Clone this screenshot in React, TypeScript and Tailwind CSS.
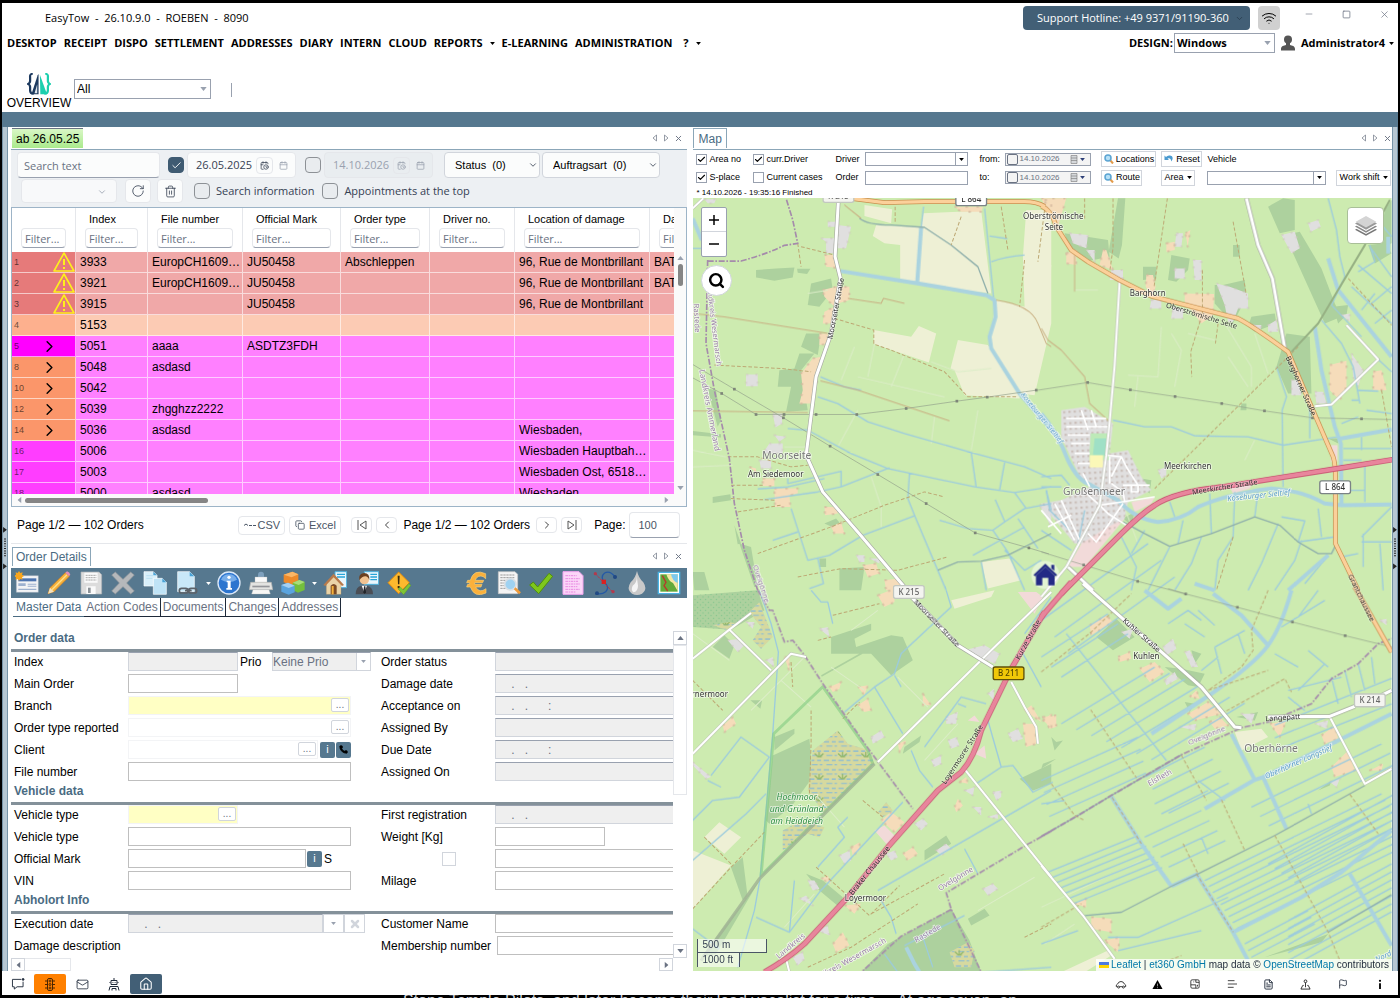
import { useState } from 'react'
import type { ReactNode } from 'react'
import clsx from 'clsx'
import {
  Wifi, Minus, Square, X, ChevronDown, ChevronLeft, ChevronRight, RotateCw, Trash2, Check,
  Mail, Home, FileText, Flag, Calendar, CalendarClock, Search, Copy, Phone,
} from 'lucide-react'

type Row = {
  no: string
  mark?: 'warn' | 'open'
  tone: string
  head: string
  cells: string[]
}

const PINK = 'bg-[#ff80ff]'
const RED = 'bg-[#f0a8a8]'

const rows: Row[] = [
  { no: '1', mark: 'warn', tone: RED, head: 'bg-[#e67a7a]', cells: ['3933', 'EuropCH1609…', 'JU50458', 'Abschleppen', '', '96, Rue de Montbrillant', 'BAT'] },
  { no: '2', mark: 'warn', tone: RED, head: 'bg-[#e67a7a]', cells: ['3921', 'EuropCH1609…', 'JU50458', '', '', '96, Rue de Montbrillant', 'BAT'] },
  { no: '3', mark: 'warn', tone: RED, head: 'bg-[#e67a7a]', cells: ['3915', '', 'JU50458', '', '', '96, Rue de Montbrillant', ''] },
  { no: '4', tone: 'bg-[#fccbb4]', head: 'bg-[#fdb08e]', cells: ['5153', '', '', '', '', '', ''] },
  { no: '5', mark: 'open', tone: PINK, head: 'bg-[#ff00ff]', cells: ['5051', 'aaaa', 'ASDTZ3FDH', '', '', '', ''] },
  { no: '8', mark: 'open', tone: PINK, head: 'bg-[#fb966a]', cells: ['5048', 'asdasd', '', '', '', '', ''] },
  { no: '10', mark: 'open', tone: PINK, head: 'bg-[#fb966a]', cells: ['5042', '', '', '', '', '', ''] },
  { no: '12', mark: 'open', tone: PINK, head: 'bg-[#fb966a]', cells: ['5039', 'zhgghzz2222', '', '', '', '', ''] },
  { no: '14', mark: 'open', tone: PINK, head: 'bg-[#fb966a]', cells: ['5036', 'asdasd', '', '', '', 'Wiesbaden,', ''] },
  { no: '16', tone: PINK, head: 'bg-[#ff3dff]', cells: ['5006', '', '', '', '', 'Wiesbaden Hauptbah…', ''] },
  { no: '17', tone: PINK, head: 'bg-[#ff3dff]', cells: ['5003', '', '', '', '', 'Wiesbaden Ost, 6518…', ''] },
  { no: '18', tone: PINK, head: 'bg-[#ff3dff]', cells: ['5000', 'asdasd', '', '', '', 'Wiesbaden', ''] },
]

const columns = ['Index', 'File number', 'Official Mark', 'Order type', 'Driver no.', 'Location of damage', 'Damage']

/* ---------- small shared pieces ---------- */

function Caret({ className, small }: { className?: string; small?: boolean }) {
  return (
    <svg viewBox="0 0 8 5" className={clsx('shrink-0', small ? 'h-[3px] w-[5px]' : 'h-1 w-[7px]', className)} fill="currentColor">
      <path d="M0 0h8L4 5z" />
    </svg>
  )
}

function PanelControls() {
  return (
    <div className="flex items-center gap-[5px] text-gray-500">
      <button aria-label="Previous"><svg viewBox="0 0 6 8" className="h-2 w-1.5" fill="none" stroke="currentColor" strokeWidth="0.7"><path d="M4.5 1v6L1 4z" /></svg></button>
      <button aria-label="Next"><svg viewBox="0 0 6 8" className="h-2 w-1.5" fill="none" stroke="currentColor" strokeWidth="0.7"><path d="M1.500 1v6L5 4z" /></svg></button>
      <button aria-label="Close"><X size={9} strokeWidth={2.5} /></button>
    </div>
  )
}

function Tick({ label, defaultChecked, big }: { label: string; defaultChecked?: boolean; big?: boolean }) {
  const [on, setOn] = useState(!!defaultChecked)
  return (
    <span className={clsx('relative inline-flex shrink-0', big ? 'size-4' : 'size-[11px]')}>
      <input
        type="checkbox"
        aria-label={label}
        checked={on}
        onChange={(e) => setOn(e.target.checked)}
        className={clsx(
          'size-full appearance-none border',
          big ? 'rounded border-[#8d9196] bg-[#e9ecef] checked:border-[#3f5b72] checked:bg-[#3f5b72]' : 'border-gray-400 bg-white',
        )}
      />
      {on && <Check className={clsx('pointer-events-none absolute inset-0 m-auto', big ? 'text-white' : 'text-black')} size={big ? 11 : 9} strokeWidth={big ? 2 : 3} />}
    </span>
  )
}

/* ---------- title bar, menu, ribbon ---------- */

function TitleBar() {
  return (
    <div className="flex h-7 items-center bg-white pr-2 pb-0.5 pl-[43px] font-['Open_Sans',sans-serif] text-[11px]">
      <span className="flex-1 pt-1 whitespace-pre">EasyTow  -  26.10.9.0  -  ROEBEN  -  8090</span>
      <button className="mt-1 flex h-6 w-[227px] items-center justify-between rounded bg-[#425f76] pr-1.5 pl-3.5 text-white">
        Support Hotline: +49 9371/91190-360 <ChevronDown size={9} className="text-[#24384a]" />
      </button>
      <button aria-label="Connection" className="mt-1 ml-2 flex h-6 w-[22px] items-center justify-center rounded bg-[#d0d0d0]">
        <Wifi size={16} strokeWidth={1.500} />
      </button>
      <div className="ml-6 flex items-center gap-7 pb-1 text-gray-500">
        <button aria-label="Minimize"><Minus size={10} strokeWidth={1.500} /></button>
        <button aria-label="Maximize"><Square size={9} strokeWidth={2} /></button>
        <button aria-label="Close window"><X size={11} strokeWidth={1.500} /></button>
      </div>
    </div>
  )
}

function MenuBar() {
  const items = ['DESKTOP', 'RECEIPT', 'DISPO', 'SETTLEMENT', 'ADDRESSES', 'DIARY', 'INTERN', 'CLOUD', 'REPORTS']
  return (
    <div className="flex h-6 items-center bg-white pr-1 pl-[5px] font-['Open_Sans',sans-serif] text-[11px] font-bold">
      <nav className="flex items-center gap-[7px] whitespace-nowrap">
        {items.map((item) => <button key={item}>{item}</button>)}
        <Caret small />
        <button>E-LEARNING</button>
        <button>ADMINISTRATION</button>
        <button className="ml-1">?</button>
        <Caret small />
      </nav>
      <label htmlFor="design" className="ml-auto">DESIGN:</label>
      <div className="relative ml-px h-5 w-[101px]">
        <select id="design" className="size-full appearance-none border border-gray-400 bg-white px-0.5"><option>Windows</option></select>
        <Caret className="pointer-events-none absolute top-2 right-1 text-gray-400" />
      </div>
      <svg viewBox="0 0 14 16" className="mx-[6px] h-4 w-3.5" fill="#555">
        <circle cx="7" cy="4.500" r="4" />
        <path d="M5 7h4v3c2 .6 5 1 5 4v1.500H0V14c0-3 3-3.400 5-4z" />
      </svg>
      <button className="flex items-center gap-1">Administrator4 <Caret small /></button>
    </div>
  )
}

function Ribbon() {
  return (
    <div className="flex h-[57px] items-start bg-white pl-1">
      <button className="flex w-[66px] flex-col items-center pt-[18px] text-xs leading-[17px]">
        <svg viewBox="0 0 54 60" preserveAspectRatio="none" className="h-[22px] w-6">
          <path d="M13 2Q6 2 7 12v10q0 6-5 8 5 2 5 8v10q0 9 8 9" fill="none" stroke="#1d3a5f" strokeWidth="5" />
          <path d="M41 2q7 0 6 10v10q0 6 5 8-5 2-5 8v10q0 9-8 9" fill="none" stroke="#1bcfae" strokeWidth="5" />
          <path d="M26 3v55h-9L10 58 24 6z" fill="#1d3a5f" />
          <path d="M29 5 45 58H30z" fill="#1bcfae" />
          <path d="M17 55l6-24v24z" fill="#dfe6ec" />
        </svg>
        OVERVIEW
      </button>
      <div className="relative mt-6 ml-0.5 h-5 w-[137px] text-xs">
        <select aria-label="View" className="size-full appearance-none border border-gray-400 bg-white px-0.5"><option>All</option></select>
        <Caret className="pointer-events-none absolute top-2 right-1 text-gray-400" />
      </div>
      <div className="mt-7 ml-5 h-3.5 w-px bg-gray-400" />
    </div>
  )
}

/* ---------- order list ---------- */

function DateBox({ value, disabled }: { value: string; disabled?: boolean }) {
  return (
    <div className={clsx('flex h-[26px] w-[109px] items-center rounded border', disabled ? 'border-gray-200 bg-[#e9edf0] text-gray-400' : 'border-gray-200 bg-[#fbfcfc]')}>
      <input aria-label="Date" defaultValue={value} disabled={disabled} className="w-[68px] pl-2 font-['Open_Sans',sans-serif] text-[11px]" />
      <button aria-label="Pick time" disabled={disabled} className="flex size-[17px] items-center justify-center rounded border border-gray-200"><CalendarClock size={9} /></button>
      <button aria-label="Pick date" disabled={disabled} className="ml-1.5 text-gray-400"><Calendar size={9} /></button>
    </div>
  )
}

function CountSelect({ text, className }: { text: string; className: string }) {
  return (
    <div className={clsx('relative h-[26px]', className)}>
      <select aria-label={text} className="size-full appearance-none rounded border border-gray-300 bg-[#fbfcfc] pl-2.5 font-['Liberation_Sans',sans-serif] text-[11px] text-black"><option>{text}</option></select>
      <ChevronDown size={10} className="pointer-events-none absolute top-2 right-0.5" />
    </div>
  )
}

function OrderFilters() {
  return (
    <div className="flex h-[57px] flex-col bg-[#edf0f3] px-1.5 pt-0.5 font-['Open_Sans',sans-serif] text-[11px] text-gray-700">
      <div className="flex items-center">
        <input placeholder="Search text" aria-label="Search text" className="mr-2 h-[26px] w-[143px] rounded border border-gray-200 border-b-gray-400 bg-[#fbfcfc] px-1.5 placeholder:text-gray-500" />
        <Tick big label="From date" defaultChecked />
        <div className="ml-[3px]"><DateBox value="26.05.2025" /></div>
        <div className="mr-[3px] ml-[9px] flex"><Tick big label="To date" /></div>
        <DateBox value="14.10.2026" disabled />
        <div className="ml-[11px] flex gap-0.5">
          <CountSelect text={'Status\u00a0 (0)'} className="w-[96px]" />
          <CountSelect text={'Auftragsart\u00a0 (0)'} className="w-[118px]" />
        </div>
      </div>
      <div className="flex items-center pt-px pl-1">
        <div className="relative h-6 w-24">
          <select aria-label="Preset" className="size-full appearance-none rounded border border-gray-200 bg-[#f8f9fa]"><option /></select>
          <ChevronDown size={10} className="pointer-events-none absolute top-2 right-2.5 text-gray-400" />
        </div>
        <button aria-label="Reload" className="ml-2 flex h-6 w-[26px] items-center justify-center rounded border border-gray-200 bg-[#fbfcfc]"><RotateCw size={14} strokeWidth={1.400} /></button>
        <button aria-label="Clear" className="ml-1.5 flex h-6 w-[26px] items-center justify-center rounded border border-gray-200 bg-[#fbfcfc]"><Trash2 size={13} strokeWidth={1.500} /></button>
        <label className="ml-[11px] flex items-center gap-1.5"><Tick big label="Search information" /> Search information</label>
        <label className="ml-2 flex items-center gap-1.5"><Tick big label="Appointments at the top" /> Appointments at the top</label>
      </div>
    </div>
  )
}

function OrderTable() {
  return (
    <div className="border border-[#9db4c7] bg-white">
      <div className="flex h-[286px]">
        <div className="min-w-0 flex-1 overflow-hidden">
          <table className="w-[700px] table-fixed border-separate border-spacing-0 text-xs">
            <colgroup>
              <col className="w-16" />
              <col className="w-[72px]" />
              <col className="w-[95px]" />
              <col className="w-[98px]" />
              <col className="w-[89px]" />
              <col className="w-[85px]" />
              <col className="w-[135px]" />
              <col />
            </colgroup>
            <thead>
              <tr className="h-11">
                {['', ...columns].map((name, i) => (
                  <th key={i} className="border-r border-gray-200 p-0 px-[9px] text-left align-bottom font-normal">
                    <span className="block pl-1 text-[11px] leading-4 whitespace-nowrap">{name}</span>
                    <input placeholder="Filter..." aria-label={`Filter ${name}`} className="mt-px mb-1 h-5 w-full rounded border border-gray-200 border-b-gray-400 px-[3px] font-['Open_Sans',sans-serif] text-[11px] placeholder:text-gray-500" />
                  </th>
                ))}
              </tr>
            </thead>
            <tbody>
              {rows.map((row) => (
                <tr key={row.no} className="h-[21px]">
                  <td className={clsx('border-r border-b border-white/60 p-0', row.head)}>
                    <div className="flex h-5 items-center pl-0.5 text-[9px] text-black/60">
                      <span className="w-[26px]">{row.no}</span>
                      {row.mark === 'open' && <ChevronRight size={19} strokeWidth={1.800} className="text-black" />}
                      {row.mark === 'warn' && (
                        <svg viewBox="0 0 22 20" className="ml-auto h-5 w-[22px]" fill="none" stroke="#fdf01c" strokeWidth="1.600" strokeLinejoin="round">
                          <path d="M11 1 21 19H1z" />
                          <path d="M11 7v6M11 15v2" strokeWidth="2" />
                        </svg>
                      )}
                    </div>
                  </td>
                  {row.cells.map((cell, i) => (
                    <td key={i} className={clsx('overflow-hidden border-r border-b border-white/60 p-0 pl-1 whitespace-nowrap', row.tone)}>{cell}</td>
                  ))}
                </tr>
              ))}
            </tbody>
          </table>
        </div>
        <div className="flex w-3 flex-col items-center bg-[#fafafa] pt-12 pb-1 text-gray-400">
          <Caret className="rotate-180" />
          <div className="mt-1 h-[22px] w-[5px] rounded-full bg-[#858585]" />
          <Caret className="mt-auto" />
        </div>
      </div>
      <div className="flex h-3 items-center bg-[#fafafa] pr-4 pl-1 text-gray-400">
        <Caret className="rotate-90" />
        <div className="ml-0.5 h-[5px] w-[183px] rounded-full bg-[#858585]" />
        <Caret className="ml-auto -rotate-90" />
      </div>
    </div>
  )
}

function Pager() {
  const box = 'flex items-center justify-center rounded border border-gray-200 bg-white'
  return (
    <div className="flex h-[37px] items-center border-b border-gray-200 pr-[7px] pl-1.5 text-xs">
      <span>Page 1/2 — 102 Orders</span>
      <button className={clsx(box, 'ml-auto h-[19px] w-[47px] gap-0.5 text-[11px] text-gray-600')}><svg viewBox="0 0 12 4" className="h-1 w-3" fill="none" stroke="currentColor"><path d="M0 2.500 2 1l2 1.500M5 2.500h3M9 2.500h3" /></svg>CSV</button>
      <button className={clsx(box, 'ml-1 h-[19px] w-[52px] gap-1 text-[11px] text-gray-600')}><Copy size={10} />Excel</button>
      <button aria-label="First page" className={clsx(box, 'ml-2.5 h-4 w-[21px]')}><svg viewBox="0 0 10 10" className="size-2.5" fill="none" stroke="#555"><path d="M1 0v10M9 1v8L3 5z" /></svg></button>
      <button aria-label="Previous page" className={clsx(box, 'ml-1 h-4 w-[21px]')}><ChevronLeft size={12} strokeWidth={1.500} /></button>
      <span className="ml-1.5">Page 1/2 — 102 Orders</span>
      <button aria-label="Next page" className={clsx(box, 'ml-1.5 h-4 w-[21px]')}><ChevronRight size={12} strokeWidth={1.500} /></button>
      <button aria-label="Last page" className={clsx(box, 'ml-1 h-4 w-[21px]')}><svg viewBox="0 0 10 10" className="size-2.5" fill="none" stroke="#555"><path d="M9 0v10M1 1v8l6-4z" /></svg></button>
      <label htmlFor="page-size" className="ml-3">Page:</label>
      <input id="page-size" defaultValue="100" className="ml-1 h-[26px] w-[51px] rounded border border-gray-200 border-b-gray-400 px-2 text-[11px] text-gray-600" />
    </div>
  )
}

/* ---------- order details ---------- */

function ToolIcon({ label, children }: { label: string; children: ReactNode }) {
  return (
    <button aria-label={label} className="flex w-8 items-center justify-center">
      <svg viewBox="0 0 72 72" className="size-6">{children}</svg>
    </button>
  )
}

function DetailsToolbar() {
  return (
    <div className="flex h-[30px] shrink-0 items-center bg-[#56788f] text-white">
      <ToolIcon label="New">
        <path d="M4 14h66v50H4z" fill="#f2f3f5" stroke="#9aa6b5" />
        <path d="M10 22h54v9H10z" fill="#4c74b0" />
        <path d="M10 37h22v8H10zM38 38h26v3H38zM38 44h26v3H38zM10 53h54v4H10z" fill="#9db1cf" />
        <path d="m12 0 4 6 7-2-2 7 6 4-6 4 2 7-7-2-4 5-4-5-6 2 1-7-6-4 6-4-1-7 6 2z" fill="#f7a51d" />
      </ToolIcon>
      <ToolIcon label="Edit">
        <path d="m3 68 6-18L55 5l12 11-46 46z" fill="#f7b13c" stroke="#d47f16" strokeWidth="2" />
        <path d="m9 50 12 12-18 6z" fill="#f3e2c0" />
        <path d="m55 5 5-4q8 2 10 10l-4 5z" fill="#e88fb5" />
        <path d="M15 56 60 11" stroke="#ffe08a" strokeWidth="4" />
      </ToolIcon>
      <ToolIcon label="Save">
        <path d="M6 3h54l8 8v58H6z" fill="#dcdcdc" stroke="#aeb2b5" strokeWidth="2" />
        <path d="M16 5h40v30H16zM22 46h28v23H22z" fill="#fafafa" />
        <path d="M20 13h32M20 20h32M20 27h32" stroke="#aaa" strokeWidth="3" strokeDasharray="4 1" />
        <path d="M27 50h8v16h-8z" fill="#8d9398" />
      </ToolIcon>
      <ToolIcon label="Cancel"><path d="m2 12 11-9 23 22L59 3l11 9-23 24 23 24-11 9-23-22-23 22-11-9 23-24z" fill="#b5b8bb" stroke="#8b9197" strokeWidth="2" /></ToolIcon>
      <ToolIcon label="Copy">
        <path d="M3 2h28l11 11v32H3z" fill="#d8effa" stroke="#fff" strokeWidth="2" />
        <path d="M31 22h27l12 12v36H31z" fill="#bfe3f6" stroke="#fff" strokeWidth="2" />
        <path d="M10 14h20M10 22h18" stroke="#b9dff2" strokeWidth="3" />
        <path d="m31 2 11 11H31zM58 22l12 12H58z" fill="#4aa3d6" />
      </ToolIcon>
      <ToolIcon label="Link document">
        <path d="M8 2h36l14 14v46H8z" fill="#c9e8f8" stroke="#fff" strokeWidth="2" />
        <path d="m44 2 14 14H44z" fill="#4aa3d6" />
        <path d="M22 52h10a6 6 0 0 1 0 14H20a7 7 0 0 1 0-14zM48 52h10a7 7 0 0 1 0 14H48a7 7 0 0 1 0-14zM30 59h20" fill="none" stroke="#5c6269" strokeWidth="5" />
      </ToolIcon>
      <span className="flex w-2.5 justify-center"><Caret small /></span>
      <ToolIcon label="Info">
        <circle cx="36" cy="36" r="33" fill="#2c75cf" stroke="#dce9f8" strokeWidth="4" />
        <path d="M12 26a26 26 0 0 1 48 0q-24 14-48 0z" fill="#78aeea" />
        <circle cx="36" cy="19" r="5" fill="#fff" />
        <path d="M29 29h12v22h4v5H28v-5h4V34h-3z" fill="#fff" />
      </ToolIcon>
      <ToolIcon label="Print">
        <path d="M36 2a9 9 0 0 1 9 9v10H27V11a9 9 0 0 1 9-9z" fill="#7ea0bd" />
        <path d="M18 18h36v18H18z" fill="#fafafa" stroke="#bbb" />
        <path d="M5 34h62l4 22H1z" fill="#e3e3e1" stroke="#b4b4b0" strokeWidth="2" />
        <path d="M10 44h52v5H10z" fill="#94959a" />
        <path d="M12 56h48l4 13H8z" fill="#f7f7f5" stroke="#bbb" />
      </ToolIcon>
      <ToolIcon label="Modules">
        <path d="m8 11 26-9 18 8v24L34 43 8 34z" fill="#ee8a2a" />
        <path d="m8 11 26-9 18 8-20 9z" fill="#fbb666" />
        <path d="m35 35 20-8 16 6v24l-20 8-16-8z" fill="#74bf3d" />
        <path d="m35 35 20-8 16 6-18 9z" fill="#a8dd7b" />
        <path d="m1 42 20-7 20 9v20l-18 7-22-9z" fill="#5aa4df" />
        <path d="m1 42 20-7 20 9-18 7z" fill="#a5d0f3" />
      </ToolIcon>
      <span className="flex w-2.5 justify-center"><Caret small /></span>
      <ToolIcon label="Home address">
        <path d="M36 2h35v48H36z" fill="#eaf6fc" stroke="#4cb1dd" strokeWidth="3" />
        <path d="M42 10h24M42 18h24" stroke="#29a4d8" strokeWidth="4" />
        <path d="M10 38 32 12l22 26v32H10z" fill="#ead3a7" stroke="#b69465" />
        <path d="m1 42 31-34 31 34-6 3-25-26L7 45z" fill="#b87a4b" />
        <path d="M23 44q9-10 18 0v26H23z" fill="#7b4a25" /><path d="M26 45h6v25h-6z" fill="#f6b33c" />
      </ToolIcon>
      <ToolIcon label="Customer">
        <path d="M28 2h43v38H28z" fill="#eaf6fc" stroke="#4cb1dd" strokeWidth="3" />
        <path d="M46 10h20M46 18h20M46 26h20" stroke="#29a4d8" strokeWidth="4" />
        <path d="M2 70q0-24 18-26h14q20 2 20 26z" fill="#4b4e55" />
        <path d="m20 44 8 20 8-20z" fill="#fff" /><path d="M27 46h4l2 18-4 5-4-5z" fill="#23262b" />
        <circle cx="28" cy="26" r="14" fill="#f1c392" />
        <path d="M13 28q-4-20 14-22 18 0 16 22-4-12-12-12-10 0-18 12z" fill="#6c4020" />
      </ToolIcon>
      <ToolIcon label="Warning">
        <path d="m35 3 32 32-32 33L3 35z" fill="#fdb92e" stroke="#e08a10" strokeWidth="3" />
        <path d="M32 14h6l-1 26h-4zM32 45h6v7h-6z" fill="#3b2c10" />
        <path d="m33 54 7-6 9 9 16-19 7 5-22 28z" fill="#7ec436" stroke="#4e9416" />
      </ToolIcon>
      <span className="w-[46px]" />
      <ToolIcon label="Invoice"><path d="M62 8v15Q48 8 34 21l-3 7h25l-3 7H29v5h22l-3 8H32q11 20 31 5v13Q28 82 16 48H5l3-8h6v-5H5l3-7h8Q26-8 62 8z" fill="#fbb03b" stroke="#f8d079" strokeWidth="2" /></ToolIcon>
      <ToolIcon label="Find document">
        <path d="M4 2h50l8 8v58H4z" fill="#f4f4f4" stroke="#c5c5c5" strokeWidth="2" />
        <path d="M10 12h42M10 20h42M10 28h20M10 36h16M10 44h16M10 52h18" stroke="#9a9a9a" strokeWidth="3" strokeDasharray="7 2" />
        <circle cx="40" cy="40" r="17" fill="#9fd2f1" stroke="#d9dfe4" strokeWidth="5" /><path d="m53 52 16 15" stroke="#ef9c3b" strokeWidth="8" />
      </ToolIcon>
      <ToolIcon label="Confirm"><path d="m2 42 11-9 13 15L60 7l11 9-42 52z" fill="#7fc71c" stroke="#4f8f0d" strokeWidth="3" /></ToolIcon>
      <ToolIcon label="Notes">
        <path d="M6 2h48l12 12v56H6z" fill="#fbd6f8" stroke="#f3a4ef" strokeWidth="3" />
        <path d="M13 14h34M13 23h44M13 31h38M13 39h44M13 47h36M13 55h44M13 63h30" stroke="#e88be2" strokeWidth="3" strokeDasharray="8 2 4 2" />
      </ToolIcon>
      <ToolIcon label="Route">
        <path d="M66 17Q50-3 35 6 22 16 32 32 52 48 38 62 28 70 14 68" fill="none" stroke="#2459a5" strokeWidth="4" />
        <path d="M7 8 58 62" stroke="#bd3143" strokeWidth="3" strokeDasharray="8 3" />
        <path d="M26 26h13v13H26z" fill="#da2020" />
        <circle cx="7" cy="8" r="5" fill="#b23a4d" /><circle cx="60" cy="62" r="5" fill="#b23a4d" /><circle cx="66" cy="18" r="6" fill="#214984" /><circle cx="12" cy="67" r="6" fill="#214984" />
      </ToolIcon>
      <ToolIcon label="Fluids">
        <path d="M36 0q5 22 19 34 14 22-4 34-15 8-30 0-18-12-4-34Q31 22 36 0z" fill="#c9c9c9" />
        <path d="M35 14q2 20-12 30-6 12 2 20 14-2 14-20z" fill="#f5f5f5" />
      </ToolIcon>
      <ToolIcon label="Map view">
        <path d="M4 4h64v64H4z" fill="#fff" stroke="#4cb4e4" strokeWidth="4" />
        <path d="M10 10h52v52H10z" fill="#62a93a" /><path d="M28 10q6 20 20 26l14 24V10z" fill="#f4e7a5" />
        <path d="M42 10q4 20 20 26V10z" fill="#7cc8ef" />
        <path d="m16 14 11 20-6 10 11 16" fill="none" stroke="#b8392b" strokeWidth="4" />
      </ToolIcon>
    </div>
  )
}

function Section({ title }: { title: string }) {
  return <h2 className="h-[21px] border-b-[3px] border-[#84919a] pl-[3px] text-xs leading-[15px] font-bold text-[#4a6b82]">{title}</h2>
}

type LineProps = { id: string; left: string; right: string; leftField?: ReactNode; rightMark?: ReactNode; rightField?: ReactNode }

function Line({ id, left, right, leftField, rightMark, rightField }: LineProps) {
  return (
    <div className="flex h-[22px] items-start pl-[3px] text-xs">
      <label htmlFor={`${id}-l`} className="w-[114px] shrink-0 leading-[21px] whitespace-nowrap">{left}</label>
      <div className="flex h-[19px] w-[253px] shrink-0 items-center">{leftField}</div>
      {rightMark
        ? <div className="flex h-[19px] w-[114px] shrink-0 items-center">{rightMark}</div>
        : <label htmlFor={`${id}-r`} className="min-w-[114px] shrink-0 pr-1.5 leading-[21px] whitespace-nowrap">{right}</label>}
      <div className="flex h-[19px] min-w-0 flex-1 items-center">{rightField}</div>
    </div>
  )
}

function Field({ id, width, value, tone = 'plain', label }: { id: string; width: string; value?: string; tone?: 'plain' | 'locked'; label?: string }) {
  return (
    <input
      id={id}
      aria-label={label}
      defaultValue={value}
      readOnly={tone === 'locked'}
      className={clsx('h-full border px-3 whitespace-pre', width, tone === 'locked' ? 'border-gray-300 border-t-gray-400 bg-[#efefef] text-gray-500' : 'border-[#bfbfbf] bg-white')}
    />
  )
}

function Picker({ id, width, yellow }: { id: string; width: string; yellow?: boolean }) {
  return (
    <div className={clsx('relative h-full shrink-0', width)}>
      <input id={id} className={clsx('size-full border border-gray-100', yellow ? 'bg-[#ffffc4]' : 'bg-white')} />
      <button type="button" aria-label="Choose" className="absolute top-0.5 right-0.5 h-3.5 w-[18px] rounded-xs border border-gray-300 bg-white text-[10px] leading-2.5 text-gray-500">...</button>
    </div>
  )
}

const wide = 'w-[230px] shrink-0'
const smallBtn = 'flex h-4 w-[15px] shrink-0 items-center justify-center rounded-xs bg-[#56788f] text-[11px] text-white'

function DetailsForm() {
  return (
    <div className="flex min-h-0 flex-1 flex-col pt-3.5">
      <div className="flex min-h-0 flex-1">
        <form className="min-w-0 flex-1 overflow-hidden">
          <Section title="Order data" />
          <Line
            id="index" left="Index" right="Order status"
            leftField={
              <>
                <Field id="index-l" width="w-[110px]" tone="locked" />
                <label htmlFor="prio" className="w-[34px] pl-0.5">Prio</label>
                <div className="relative h-full w-[99px]">
                  <select id="prio" className="size-full appearance-none border border-gray-300 border-t-gray-400 bg-[#efefef] text-gray-500"><option>Keine Prio</option></select>
                  <span className="pointer-events-none absolute top-px right-px flex h-[17px] w-3.5 items-center justify-center border-l border-gray-300 bg-white text-gray-400"><Caret small /></span>
                </div>
              </>
            }
            rightField={<Field id="index-r" width={wide} tone="locked" />}
          />
          <Line id="main" left="Main Order" right="Damage date" leftField={<Field id="main-l" width="w-[110px]" />} rightField={<Field id="main-r" width={wide} value=" .   ." tone="locked" />} />
          <Line id="branch" left="Branch" right="Acceptance on" leftField={<Picker id="branch-l" width="w-[223px]" yellow />} rightField={<Field id="branch-r" width={wide} value=" .   .      :" tone="locked" />} />
          <Line id="type" left="Order type reported" right="Assigned By" leftField={<Picker id="type-l" width="w-[223px]" />} rightField={<Field id="type-r" width={wide} tone="locked" />} />
          <Line
            id="client" left="Client" right="Due Date"
            leftField={
              <>
                <Picker id="client-l" width="w-[190px]" />
                <button type="button" aria-label="Client info" className={clsx(smallBtn, 'mr-px ml-0.5')}>i</button>
                <button type="button" aria-label="Call client" className={smallBtn}><Phone size={9} fill="#000" stroke="#000" /></button>
              </>
            }
            rightField={<Field id="client-r" width={wide} value=" .   .      :" tone="locked" />}
          />
          <Line id="file" left="File number" right="Assigned On" leftField={<Field id="file-l" width="w-[223px]" />} rightField={<Field id="file-r" width={wide} tone="locked" />} />
          <Section title="Vehicle data" />
          <Line id="vtype" left="Vehicle type" right="First registration" leftField={<Picker id="vtype-l" width="w-[110px]" yellow />} rightField={<Field id="vtype-r" width={wide} value=" .   ." tone="locked" />} />
          <Line id="vname" left="Vehicle type" right="Weight [Kg]" leftField={<Field id="vname-l" width="w-[223px]" />} rightField={<Field id="vname-r" width="w-[110px]" />} />
          <Line
            id="plate" left="Official Mark" right=""
            leftField={
              <>
                <Field id="plate-l" width="w-[178px]" />
                <button type="button" aria-label="Plate info" className={clsx(smallBtn, 'mr-0.5 ml-px')}>i</button>
                <label htmlFor="plate-s">S</label>
              </>
            }
            rightMark={<input id="plate-s" type="checkbox" className="ml-[61px] size-3.5 appearance-none border border-gray-300 bg-white" />}
            rightField={<Field id="plate-r" label="Official mark addition" width={wide} />}
          />
          <Line id="vin" left="VIN" right="Milage" leftField={<Field id="vin-l" width="w-[223px]" />} rightField={<Field id="vin-r" width={wide} />} />
          <Section title="Abholort Info" />
          <Line
            id="exec" left="Execution date" right="Customer Name"
            leftField={
              <>
                <Field id="exec-l" width="w-[195px]" value=" .   ." tone="locked" />
                <button type="button" aria-label="Pick date" className="flex h-full w-[21px] items-center justify-center border border-gray-300 text-gray-400"><Caret small /></button>
                <button type="button" aria-label="Clear date" className="flex h-full w-[21px] items-center justify-center border border-gray-300 text-gray-300"><X size={12} strokeWidth={5} /></button>
              </>
            }
            rightField={<Field id="exec-r" width={wide} />}
          />
          <Line id="damage" left="Damage description" right="Membership number" rightField={<Field id="damage-r" width={wide} />} />
          <textarea id="damage-l" readOnly className="ml-[3px] block h-10 w-[350px] resize-none bg-[#efefef]" />
        </form>
        <div className="flex w-[14px] flex-col text-gray-500">
          <button aria-label="Scroll up" className="flex h-3.5 shrink-0 items-center justify-center border border-gray-300"><Caret className="rotate-180" /></button>
          <div className="h-[150px] border border-gray-200" />
          <button aria-label="Scroll down" className="mt-auto flex h-3.5 shrink-0 items-center justify-center border border-gray-300"><Caret /></button>
        </div>
      </div>
      <div className="mr-3.5 flex h-[13px] shrink-0 text-gray-500">
        <button aria-label="Scroll left" className="flex w-3.5 items-center justify-center border border-gray-300"><Caret className="rotate-90" /></button>
        <div className="w-[46px] border border-l-0 border-gray-200" />
        <button aria-label="Scroll right" className="ml-auto flex w-3.5 items-center justify-center border border-gray-300"><Caret className="-rotate-90" /></button>
      </div>
    </div>
  )
}

function OrdersPane() {
  const tabs = ['Action Codes', 'Documents', 'Changes', 'Addresses']
  return (
    <section className="flex min-h-0 min-w-0 flex-[676_1_0%] flex-col bg-white">
      <div className="flex h-[23px] shrink-0 items-center justify-between border-b border-[#8ba6b8] pr-1 pl-px">
        <button className="h-5 border-t border-gray-500 bg-gradient-to-b from-[#d9f7c6] to-[#aaea8c] px-1 text-xs">ab 26.05.25</button>
        <PanelControls />
      </div>
      <OrderFilters />
      <OrderTable />
      <Pager />
      <div className="flex h-6 shrink-0 items-center justify-between pr-1 pl-px">
        <button className="h-[19px] border-x border-t border-[#8ba6b8] px-[3px] text-xs text-[#4a6b82]">Order Details</button>
        <PanelControls />
      </div>
      <DetailsToolbar />
      <div className="flex h-[19px] shrink-0 pl-0.5 text-xs text-gray-500">
        <button className="border-b border-[#4a6b82] px-[3px] text-[#4a6b82]">Master Data</button>
        {tabs.map((t) => <button key={t} className="border-r border-b border-gray-800 px-0.5">{t}</button>)}
      </div>
      <DetailsForm />
    </section>
  )
}

/* ---------- map ---------- */

// The area is drawn on four sheets, each with its own origin in map units (3 per pixel).
type Sheets = { nw?: string; ne?: string; sw?: string; se?: string }

const origin = {
  nw: 'translate(-6 -24)',
  ne: 'translate(1044 -24)',
  sw: 'translate(-6 1176)',
  se: 'translate(1044 1176)',
}

function Layer({ d, fill = 'none', stroke, width, dash, opacity }: { d: Sheets; fill?: string; stroke?: string; width?: number; dash?: string; opacity?: number }) {
  return (
    <g fill={fill} stroke={stroke} strokeWidth={width} strokeDasharray={dash} opacity={opacity} strokeLinejoin="round">
      {(Object.keys(d) as (keyof Sheets)[]).map((k) => <path key={k} transform={origin[k]} d={d[k]} />)}
    </g>
  )
}

// n parallel drainage ditches starting at (x, y), each shifted by (sx, sy)
function ditches(x: number, y: number, dx: number, dy: number, n: number, sx: number, sy: number) {
  return Array.from({ length: n }, (_, i) => `M${x + i * sx} ${y + i * sy}l${dx} ${dy}`).join('')
}

const farmland: Sheets = {
  nw: 'M697 70L870 62 893 250 900 310 720 290 627 268V165L580 160 545 138 555 105 690 112zM520 45l83 13-3 42-80-22zM548 420l112 20 23-32 52 22-22 87-165-55zM800 450l90 15 95 145v15l-165-10-30-75-12-5zM1005 60h75v340l-50 215-45-5-92-140 22-140 85 20-5-150zM870 1115l85-10 35 65-100 25z',
  ne: 'M0 220l30 5-10 175-20 80z',
  sw: 'M40 740l45-45 65 45-50 50zM5 780l115 45L5 955zM780 30L910 0l-10 20-110 35z',
  se: 'M580 425l80-10 20 25-80 40zM60 1145l140-65 10 15-80 50z',
}
const forest: Sheets = {
  nw: 'M195 240l60-5 55-3-5 30-55 10-55-10zM318 236l40 0-10 16-28-4zM360 280l60-15 5 35-40 50-35-5zM345 430h45l-10 65-50-25zM325 490h45l-40 50 20 120-65 5 15-75h-40l5-50 45-5zM5 722l85 10v10l-85-7zM65 920l53-8 2 18-55 8zM50 595l25 5 15 90-10 20zM130 1005l20 55-10 2zM145 1060l35 10 20 120h-10zM445 1135l75-5-10 70h-65zM385 1105h20v25h-20zM5 1145h35l15 55H10zM400 1000l35-15 10 12-20 14z',
  ne: 'M230 25h22l-10 140-10 40-30-20zM70 130l130 20 5 50-75 15-50-55zM390 195l55 10-5 35-35 35-25-5zM305 230h40v35l-40 5zM575 165h20v35h-20zM680 50l45-25 35 5v90l-45 10zM730 135l45-10 65 110 40 105 20 40-50 20zM735 430l70 10 5 170h-70l-35-80zM620 410l10-30 70-10 5 30-65 25zM520 285h25l65-15 5 50-40 80-55-60zM980 165l50-5 20 30-50 30zM1030 60l20-30v130l-40 20zM600 640h15v20h-18zM300 865l30 5-5 40-15-10zM245 985l35-20-10 40zM860 745h30v15zM875 350l45-5-5 30-25 25z',
  sw: 'M5 15L200 0l20 60-100 58-115-8zM65 170l35-35 30 30-15 40zM420 140l120-40v20l-50 25 5 25 105-35 35 5 30 70-65 45-60-65h-120zM245 495l110-50 10 115-65 90-65 50-10-10zM250 440l60-25v15l-60 50zM590 1060l190-105 55 95 35 95H510zM120 830l35-30 15 120-15 10zM205 870L30 1100l45-10zM700 780l65-45 15 25-80 50zM345 850l50 20 60 50-10 30-60-50zM830 985l50-30 15 20-55 30zM985 565l95-45v60l-55 20zM640 470l50-35-5 20-50 35zM390 255l150-85v6l-148 83zM178 330l35 0-5 25z',
  se: 'M165 140l60-55 55 55-65 40zM370 230l50 5 70 15-20 40-30-5zM450 180l30 10-20 30zM30 440l15 15 20-5-25 30zM5 520l40-15-45 30zM830 600l40-30-5 15zM585 380l65-15-10 25zM670 1100l190-70-20 25zM430 335l30 5-15 25z',
}
const town = 'M60 660l70-10 85 50-10 90 55-10 40 80 30 40-70 35-10 50-75 75h-75L0 940l60-10 85-40-25-20-60-130z'
const built: Sheets = {
  nw: 'M440 105l40 5-15 65h-25zM410 95h25v15h-25zM390 145h40v45h-25v-35zM165 553h35v35h-35zM245 670h28v30l-20 12zM235 760h40v30h-60zM205 810h35v25h-30zM250 735l35 5-20 15zM40 28h35l-5 12H50zM495 1095h25v20h-15zM535 1105h30v15zM1045 945l35-5v70z',
  ne: 'M85 130l55 5-5 40-40-15zM135 180h25v35zM210 240h35v30h-40zM330 330h30v25h-35zM395 350l32 10-3 25h-35zM455 210h25v60h-20zM400 235h30v30h-30zM405 130h20l-5 40h-20zM525 280l40 10 55 20v45h-30l-15 40h-15l-10-50zM720 135l40-10 15 50-25 15zM800 100l30-10 8 20-30 15zM680 405l25-15 5 35h-30zM635 405h25l-5 25zM930 490l35 50-15 50-15-30zM750 570h20l10 45h-30zM820 605h25l10 35h-30zM900 375l25-5 0 25zM350 840l25-10 0 25-15 10z',
  sw: 'M110 150l40-5 10 20-20 20zM165 95h25l-5 20zM225 210l20-10 5 30zM385 115l25-5 5 30zM5 515l55 45-15 5-40-40zM540 440l30-20 10 20-35 20zM765 380l35-15-5 35h-30zM770 450l25-10 10 25-25 10zM820 180l60-15 45 25-15 30-70-30zM720 510l30-15v25l-20 10zM820 600l30-10-5 25zM905 605l25-5v20l-15 10zM845 650l25 0v25zM890 680l30-10v15zM670 700l25-15 15 15-20 20zM445 795l30-15 5 30-20 10zM585 790l25-10 10 20-20 10zM350 870h20l15 25-20 5zM325 925l20-10 20 30zM950 430l30-15 15 30-30 10zM875 895l30-15 15 15-30 20zM735 780l30-20 15 15-30 20zM305 1100l30-15 5 20-20 20zM380 1020l30-15 5 30zM890 310l18-15 0 35z',
  se: 'M365 170l30-25 10 30-30 20zM370 270l30-25 10 20-35 20zM430 185l15-5 25 50h-20zM415 410l50-10-5 20zM820 400l40-10-5 25zM240 125l35-10-10 30zM600 370h40l-10 30zM865 575l30-10-10 25zM1015 90l20-5v20z',
}
const farmyard: Sheets = {
  nw: 'M400 195h28l5 38-28-3zM395 300l40-10h40v40l-35 10-20 60h-25l5-35 30-15-30-30zM385 430h25v30l-25 5zM365 505l25-5-10 60-15 80h-40l10-40-5-50zM250 895h70v15l-25 5 3 35h-46zM215 865h35v22h-35zM400 950h35l5 20-38 5zM420 1010l30-15 10 35h-30zM515 1125l40-5 10 30-35 10zM580 1170l40-5 15 35h-50zM790 50h85l-5 15h-60zM1060 30h20v60zM175 830l20 5 0 12z',
  ne: 'M430 310l88 2-3 63-35 25-50-65zM315 255h20l8 35-10 30-20-30zM185 180h10l20 60-40-15zM75 190l30-10v45l-30-5zM375 160l25-5v25l-25 5zM432 130l15-10-8 50zM865 525l50-13v78l-20 40-30-30zM995 545l25-5 15 60h-40zM0 25h75l-25 85-30-40z',
  sw: 'M95 405l30-25 10 20-35 25zM415 290l35-15-5 20-20 10zM500 290l30-5-10 30zM500 345l30-20 10 35-20 5zM280 200h15v45zM695 310l25 35h-25zM620 460l25-10-20 35zM570 690l30-25 40 30-30 30zM1000 360l20-15 30 50zM995 400h35l5 60-30 10-5-30zM480 770l25-15v25l-20 15zM635 790l30-20 15 20-30 20zM390 865l20-10 10 25zM460 945l50-5-20 30zM790 650l10-25 15 20-20 20zM805 575l20-15 5 20zM425 1060l30-35 20 40-40 20zM560 15l50-20v40l-30 15zM1055 390l25-20v40z',
  se: 'M145 105l50-30 20 20-65 40zM295 235l45-20 30 30-45 30zM230 200l35-15 5 20-35 10zM440 370l60-35 40 35-80 20zM505 395l30-15 25 25-40 10zM445 320l20-20 10 25zM5 380l40-5v35l-20 5zM685 400l50-10-20 50zM840 435l40-30 10 40-40 15zM870 530l50-50 20 60-60 20zM985 540l40-20-5 20zM100 940l35-15v25zM150 980l60 5v40l-60-10zM190 1050l45-10-5 45z',
}
const commercial: Sheets = {
  ne: 'M250 985L130 1130H80l40-70 80-50zM270 935l70-15-10 20-50 25zM868 765h20v50h-20zM560 880l75-5-10 20-50 15z',
  sw: 'M980 5h55l20 15-25 50zM850 490l30-25 5 40zM830 390l20-15 15 20zM550 720l30-15 30 30-20 30z',
}
const heath: Sheets = {
  sw: 'M365 480l75-60 30 40 65 20 15 40-150 150-50-70zM275 720l55-30 70 20-15 30-35-10-75 50zM175 65l30-30 40 105-35 35-25-25 25-40zM65 105l50-10 20 5-25 20zM560 665l25-30 20 25-30 20zM775 1085l55-30 20 25-10 50h-50z',
}
const river: Sheets = {
  nw: 'M448 243l232 37 205 35 25 15 3 50-18 60 5 35 85 135 115 130M690 110l-12 170M5 85l27 65',
  ne: 'M0 670Q50 730 80 810q30 60 60 70l90 50q50 55 120 65 70-5 120-45 90-40 220-55 90 5 160 45l50 5 150-2M820 410l20 130 40 170 18 50 2 180M860 205l30 95 80 100 80 100M898 745l152-27M1040 140v50M860 1095l-120 105M460 1180l60 20',
  sw: 'M645 1070l25 50 15 25',
  se: 'M210 618l90 142 90 127M465 850l110 175 45 85M490 655l150-87 25-8 205-100 180-90M570 430l70 138M665 560l70 155M575 1025l205-105 120-75 150-125M925 850l125 215M750 0q-30 110-70 165-40 55-170 145L330 430M515 10l85 65 80 90M310 0l70 55 40-30M390 887l80-37',
}
const stream: Sheets = {
  nw: 'M697 50l-7 60M880 55l27 270M900 215q40-15 100-20M895 138l53 8M388 560l72 30 50 10M380 620l60 20 90 55 110 35 200 57 160 43 80 35M290 715l60 5 130 70 110 45 260 55 120 17 110-17M595 833L450 890l-70 15-160 23M450 890v-47l-160 37v-15M200 896l90-6 110-25M840 787l15 105M940 817l-15 83M655 848l-5 77 22 55 93 220M670 977l-155 58-100 60-65 15-50-155M245 1050l75-25M380 1105l17 75-42 15M745 990l85 25 75 5 35-25 60-40 80-15M912 928l28 65M905 1020l45 65 50 115M845 1095l155-85M970 907l35 48M870 1115l15 85M5 175h30M940 1080l60 60 50-30M980 985l60 90M1065 900l15 60',
  ne: 'M215 690l95 20h80l70 27 160 3 105 25 165-25M705 530l30 90-13 40 3 230M840 390l60 70 35 70 20 110M0 860l60-5 25 30M0 890h60M805 650v95M860 25l25 95 10 80 15 60-40 85M950 225l100 85M985 165l15 50-50 30M1050 290l-60 50M930 290l120 110M1000 310l-40 50M1050 360l-50 40M870 345l90 95M1010 508l40 37M950 600l60 3M905 775h145M905 810h55M960 740v40M975 660l75 10M930 630h25M900 700l50-20M970 820v115M905 900h65M240 1040l45 90-15 70M425 990l-15 70M505 910l5 120M580 905l-5 135-45 70-10 90M650 900l-10 80M385 935l15 45M310 1020l-40 70M385 1070l-65 130M720 980l70 12-20 63M830 955l10 85M770 1055l110-15M860 1095l-70 85M960 1040l90-90M965 1030v100M900 1100l50-10M1050 1055h-90M700 1200l60-90 20-60M710 1000l-50 120-40 80M480 1040l-30 80-50 80M1015 1060l10 140M15 900l10 60 60 60M0 1020l90 60M130 960l-20 100M985 170l65 90M1000 80l50 60',
  sw: 'M205 0l35 100 22 85-17 245-38 435-17 95-50 170M360 0l30 35 20 0 15 65M765 0l15 50-150 140-20 60-60 40-90 75M550 290l85 140M610 255l20 35M5 690l60-60 80-10 90-120-85-60-90 115M50 570l40 20M5 810l160-140 60-60M195 980l100 45 15-155M295 1025l90-120 250-270M380 830l80-90-20-30 30-30M660 480l25 60 40 50M700 470l110-150 75 20M800 340l25 10M895 370l-5 20 40 140 35-5 60 80 60-30M930 530l-75 50M990 180l60 110M1080 600L560 900M570 930l30 50 15 50M820 775l40 75M580 1090l40 55M695 1040l30 90M1080 1130L870 1145M5 1015l80 60M1000 130l80-110M640 1065l180-90',
  se: `M0 640l70-10M480 740l20 50M800 640l10 30${ditches(0, 90, 320, -230, 3, 40, 50)}${ditches(0, 200, 200, -130, 3, 30, 30)}${ditches(60, 400, 280, -170, 7, 45, 18)}${ditches(0, 570, 290, -130, 4, 8, 36)}${ditches(310, 560, 180, -90, 4, 24, 36)}${ditches(20, 845, 270, -110, 7, 12, 16)}${ditches(310, 740, 170, -80, 4, 24, 30)}${ditches(340, 640, 140, -70, 2, 20, 30)}${ditches(630, 650, 390, -190, 3, 26, 28)}${ditches(490, 870, 530, -260, 9, 12, 18)}${ditches(740, 990, 310, -170, 7, 0, 24)}${ditches(610, 1060, 190, -100, 3, 10, 20)}${ditches(700, 480, 350, -140, 3, 0, -38)}${ditches(680, 820, 380, -210, 5, 20, 14)}M75 130l300 380M430 100l60 40M470 60l50 45M380 100l60-40 40 30M520 170l90-50M520 170l20 80M590 130l20 60M480 240l50-40M700 190l70 40M720 110l130-80M770 80l60-80M800 180l60 50M740 320l50 40M770 300l80-80M870 260l20 80M910 240l20 80M950 220l20 80M990 200l10 80M740 300l160-40M550 630l-80-60M200 1040h90L560 920M230 1080l250-60M0 1060l110-40`,
}
const greyStream: Sheets = {
  nw: 'M505 85q25 20 95 20l100 7 80 53 80 65 30 80M740 1140l60-25 70-2 80-18 130-65',
  ne: 'M245 995l65 35 75 38 125-38 130-50 75 25 55 50 60 35h40l15-30',
  se: 'M130 975l110-10 150-78 80-37 230-115 270-150M860 1025l190-113M0 738l110-63 100-60 210-122',
}
const track: Sheets = {
  nw: 'M430 385l118 35v42l52 18 160 65 70 75h150M70 525l200 10 90 10M110 800h90l100 30 50-5M140 965l130-20M200 1090l220-80 160-65 120-40 60 15M320 1160l130-25 170 5 150-40M120 885h95M612 50v50M810 80l-30 85M930 50l20 130M1000 210l-15 140M1060 60l-20 155M330 170l100 25M320 160l10 70M120 925l130 5',
  ne: 'M130 25v60M215 25v150l-10 70M378 25l-25 165-15 100M483 240v130l-35 115 3 75M530 400l-8 60M575 95l40 220M920 265l130 140M770 470L340 895M575 1040l-50 160M1020 600l30 170',
  sw: 'M5 270l90 90M300 215l5 75M380 150l40-10M425 75l140-35M360 360v100l-5 150M40 740l80 80M5 955l120-130 95-100M375 830l100 90 60 55 90-90M350 1130l130-60 200-130M540 970l220-120M515 630l60 50M1000 1040l80-40M455 385l50-50',
  se: 'M0 245l150-120 120-115M148 358l137 204M420 495l75 135M540 628l70 152M700 735l160 290 35 85M925 612l85 118M30 580l70 95 30 15M680 0l-50 120 5 60-35 50-100 70M540 370l190-105 20 40M425 760l45 90M0 1010l120-70M370 1115l50-20M465 850l110 175M300 760l-90-142M500 300l180-60',
}
const path: Sheets = {
  nw: 'M470 325l100 15 7-15 63 15M5 370l95 10 310 50M5 662l345 5M388 572l112 28 275 92M915 330q105 15 125 70l25 60 15 10M460 45l50 40',
  ne: 'M0 415l20 35 40 30 70 80 15 80 60 55M100 195v110',
}
const fieldLine: Sheets = {
  nw: 'M550 460l-20 100M640 490l-40 100M490 470l-40 100M500 660l-60 110M860 660l-20 120M730 680l-10 80M540 860l30 90v60M280 770h70M5 780l100 20M5 830l120-5M500 560l260 60M720 515l80 30 100-10M410 300l-60 10',
  ne: 'M100 300h70M360 410l-10 150M440 430l80 20M550 400l80 130v60M260 555l90 5M560 500l60 90M290 560l-10 90M640 430l40 120M390 430l30 50-20 110M230 900l60 160M640 750l-30 60',
  sw: 'M5 130l110 80M340 200L180 360M560 60l-80 60M620 260l90 90M800 400l-100 110M420 230l100 70M270 270l90 80M380 620l80 90M860 960l170-100M280 1010l90-100',
  se: 'M0 950l300-140M100 1000l-90 60',
}
const boundary: Sheets = {
  nw: 'M50 213h100q80-22 130-47l40-6-15-70-20-65M50 210l-5 250 25 140 45 205 15 135 30 140 40 120',
  sw: 'M200 0l35 60h10l35 95 25-5 35 45 55 85 140 200 130 175M1080 722l-80 45-235 140 15 50 90 188M780 957l-150 80-120 108',
  se: 'M0 738l110-63 100-60 210-122 140-63 40-18 80-17 130-55 60-75 80-45 60-60 40-15',
}
const power: Sheets = {
  nw: 'M5 523l125 74 147 86 140 85 143 85 145 87 147 88 161 45 60 18M5 563l87 47 103 63h302l148-18 152-22 91-12 147-21',
  ne: 'M-10 600l149-23 128 22 134 20 140 21 128 22 144 21 147 3 90 2M0 1085l127 39 162 49 144 38',
  se: 'M380-5l53 16 155 40 165 44 158 41 139 34',
}
const pylons: [keyof typeof origin, number, number][] = [
  ['nw', 130, 597], ['nw', 277, 683], ['nw', 417, 768], ['nw', 560, 853], ['nw', 705, 940], ['nw', 852, 1028], ['nw', 1013, 1073],
  ['nw', 92, 610], ['nw', 195, 673], ['nw', 279, 673], ['nw', 375, 673], ['nw', 497, 673], ['nw', 645, 655], ['nw', 797, 633], ['nw', 888, 621], ['nw', 1035, 600],
  ['ne', 139, 577], ['ne', 267, 599], ['ne', 401, 619], ['ne', 541, 640], ['ne', 669, 662], ['ne', 813, 683], ['ne', 960, 686], ['ne', 127, 1124], ['ne', 289, 1173],
  ['se', 433, 11], ['se', 588, 51], ['se', 753, 95], ['se', 911, 136],
]
const lane: Sheets = {
  nw: 'M5 55l32-30',
  ne: 'M235 275l-15 250-15 170-10 100-20 150-100 185-75 90M915 405l95 103-140 135-50 5',
  sw: 'M5 205l110-87 65-50M115 118l125 122M5 490l295-300 45 10M560 515l340-335L1080 5M815 530l265 330M960 275l40 75 35 60 5 50M285 1105l10 40',
  se: 'M865 380l105 200 80-45M0 825l125 150 95 130',
}
const street: Sheets = {
  ne: 'M75 685h120M75 710h125M80 735h65M90 760h55M100 790h45M110 820h35M150 660l15 50M120 660l20 60M195 795l45 5 15 30 35 55h35M175 945l70-10 95-15M210 880l35 25 5 30M205 800v80M240 800l-30 60M245 885h75M270 885v20h20v-20M175 945l25 25 55 35M40 940l60 110M60 930l55 120M0 960l60 70M20 1010l70-35M140 1030l25 25 80-115M130 905l45 40M145 890l-20-40',
}
const tertiary: Sheets = {
  nw: 'M442 30l-10 170 16 65-28 165-45 130-30 235 50 110 105 120 140 165',
  ne: 'M615 25l35 140 43 100 37 210M80 1130l75 70',
  sw: 'M640 0l60 60 100 105 105 65',
  se: 'M125-20l125 110 105 90 125 110 100 120 20 2M680 380l120-2h65l75-30M1020 315l30-15',
}
const secondary: Sheets = {
  nw: 'M480 25l100 13 120-3h300q35 0 60 14',
  ne: 'M0 48q30 12 45 62l45 70 50 35 95 55 95 48 260 67q40 20 150 100l70 165 65 150q7 20 7 70v190l68 140',
  se: 'M940-10l110 195',
}
const primary: Sheets = {
  ne: 'M1055 808l-155 25-360 57q-140 15-200 55-40 25-100 85L60 1210',
  se: 'M90-25L0 80',
  sw: 'M1060 65l-15 25-85 145-90 185q-20 80-60 125l-70 55-150 170-120 150-130 140q-50 45-120 85',
}

const labels: { at: keyof typeof origin; x: number; y: number; r?: number; size: number; color?: string; text: string; italic?: boolean }[] = [
  { at: 'nw', x: 287, y: 807, size: 31, color: '#777', text: 'Moorseite' },
  { at: 'nw', x: 254, y: 861, size: 24, text: 'Am Siedemoor' },
  { at: 'nw', x: 434, y: 355, r: -79, size: 22, text: 'Moorseiter Straße' },
  { at: 'nw', x: 70, y: 405, r: 83, size: 22, color: '#9a7fa8', text: 'Landkreis Wesermarsch' },
  { at: 'nw', x: 18, y: 384, r: 87, size: 23, color: '#9a7fa8', text: 'Rastede' },
  { at: 'nw', x: 56, y: 660, r: 79, size: 24, color: '#9a7fa8', text: 'Landkreis Ammerland' },
  { at: 'nw', x: 212, y: 1180, r: 72, size: 23, color: '#9a7fa8', text: 'Ovelgönne' },
  { at: 'ne', x: 36, y: 88, size: 24, text: 'Oberströmische' },
  { at: 'ne', x: 38, y: 119, size: 24, text: 'Seite' },
  { at: 'ne', x: 319, y: 317, size: 24, text: 'Barghorn' },
  { at: 'ne', x: 481, y: 376, r: 17, size: 22, text: 'Oberströmische Seite' },
  { at: 'ne', x: 779, y: 587, r: 66, size: 22, text: 'Barghorner Straße' },
  { at: 'ne', x: 439, y: 836, size: 24, text: 'Meerkirchen' },
  { at: 'ne', x: 158, y: 915, size: 31, color: '#777', text: 'Großenmeer' },
  { at: 'ne', x: 550, y: 890, r: -9, size: 22, text: 'Meerkircher Straße' },
  { at: 'ne', x: 652, y: 915, r: -6, size: 23, color: '#5f9fca', text: 'Koseburger Sieltief', italic: true },
  { at: 'ne', x: 4, y: 682, r: 51, size: 23, color: '#5f9fca', text: 'Koseburger Sieltief', italic: true },
  { at: 'ne', x: 961, y: 1222, r: 64, size: 22, text: 'Grantchaussee' },
  { at: 'sw', x: 738, y: 98, r: 46, size: 22, text: 'Moorseiter Straße' },
  { at: 'sw', x: 1010, y: 148, r: -61, size: 22, text: 'Kurze Straße' },
  { at: 'sw', x: 813, y: 492, r: -57, size: 22, text: 'Loyermoorer Straße' },
  { at: 'sw', x: 535, y: 840, r: -51, size: 23, text: 'Braker Chaussee' },
  { at: 'sw', x: 523, y: 931, size: 24, text: 'Loyermoor' },
  { at: 'sw', x: 56, y: 321, size: 24, text: 'rnermoor' },
  { at: 'sw', x: 317, y: 630, size: 26, color: '#2f8f43', text: 'Hochmoor', italic: true },
  { at: 'sw', x: 317, y: 665, size: 26, color: '#2f8f43', text: 'und Grünland', italic: true },
  { at: 'sw', x: 317, y: 700, size: 26, color: '#2f8f43', text: 'am Heiddeich', italic: true },
  { at: 'sw', x: 793, y: 864, r: -31, size: 23, color: '#9a7fa8', text: 'Ovelgönne' },
  { at: 'sw', x: 709, y: 1028, r: -30, size: 23, color: '#9a7fa8', text: 'Rastede' },
  { at: 'sw', x: 470, y: 1110, r: -29, size: 23, color: '#9a7fa8', text: 'Landkreis Wesermarsch' },
  { at: 'sw', x: 298, y: 1066, r: -40, size: 23, color: '#9a7fa8', text: 'Landkreis' },
  { at: 'se', x: 301, y: 134, r: 41, size: 22, text: 'Kuhler Straße' },
  { at: 'se', x: 315, y: 206, size: 24, text: 'Kuhlen' },
  { at: 'se', x: 724, y: 381, r: -4, size: 22, text: 'Langepatt' },
  { at: 'se', x: 689, y: 486, size: 31, color: '#777', text: 'Oberhörne' },
  { at: 'se', x: 495, y: 434, r: -22, size: 23, color: '#9a7fa8', text: 'Ovelgönne' },
  { at: 'se', x: 355, y: 561, r: -29, size: 23, color: '#9a7fa8', text: 'Elsfleth' },
  { at: 'se', x: 771, y: 514, r: -24, size: 23, color: '#5f9fca', text: 'Oberhörner Langstief', italic: true },
  { at: 'se', x: 1025, y: 1097, r: -25, size: 23, color: '#5f9fca', text: 'Nord', italic: true },
]

function Shield({ x, y, text, tone = 'light' }: { x: number; y: number; text: string; tone?: 'light' | 'grey' | 'yellow' }) {
  const style = {
    light: { fill: '#fff', stroke: '#7b8286', text: '#333' },
    grey: { fill: '#f4f4f0', stroke: '#c2c7c0', text: '#666' },
    yellow: { fill: '#f0c808', stroke: '#5f5008', text: '#514400' },
  }[tone]
  return (
    <g transform={`translate(${x} ${y})`}>
      <rect x="-46" y="-19" width="92" height="38" rx="6" fill={style.fill} stroke={style.stroke} strokeWidth="4" />
      <text y="9" textAnchor="middle" fontSize="24" fontWeight="500" fill={style.text}>{text}</text>
    </g>
  )
}

function MapCanvas() {
  return (
    <svg viewBox="0 0 2094 2319" preserveAspectRatio="xMinYMin slice" className="absolute inset-0 size-full font-['Noto_Sans',sans-serif]">
      <defs>
        <pattern id="marsh" width="44" height="28" patternUnits="userSpaceOnUse">
          <path d="M2 6h16M26 6h12M10 19h18M34 19h8" stroke="#7fb8dc" strokeWidth="3" />
        </pattern>
        <pattern id="tufts" width="70" height="66" patternUnits="userSpaceOnUse">
          <path d="M30 36l-9-9M34 36V22M38 36l9-9M28 37h14" stroke="#93b86b" strokeWidth="4" />
        </pattern>
        <pattern id="trees" width="16" height="16" patternUnits="userSpaceOnUse">
          <circle cx="4" cy="4" r="2" fill="#7fc48c" /><circle cx="12" cy="12" r="2" fill="#7fc48c" />
        </pattern>
        <pattern id="houses" width="16" height="17" patternUnits="userSpaceOnUse" patternTransform="rotate(-4)">
          <path d="M3 4h6v5H3z" fill="#bfaea6" />
        </pattern>
      </defs>
      <rect width="2094" height="2319" fill="#cdebb0" />
      <Layer d={farmland} fill="#eef0d5" />
      <Layer d={forest} fill="#add19e" />
      <Layer d={{ sw: 'M5 15L200 0l-20 60-60 58-115-8z' }} fill="url(#trees)" />
      <Layer d={built} fill="#e0dfdf" />
      <Layer d={farmyard} fill="#f5dcba" />
      <Layer d={built} stroke="#cfc5bf" width={6} dash="6 22" opacity={0.6} />
      <Layer d={farmyard} stroke="#d4b99f" width={6} dash="7 26" opacity={0.8} />
      <Layer d={{ ne: town }} fill="#e0dfdf" />
      <Layer d={commercial} fill="#f2dad9" />
      <Layer d={{ ne: town }} fill="url(#houses)" />
      <Layer d={heath} fill="#d6d99f" />
      <Layer d={heath} fill="url(#marsh)" />
      <Layer d={heath} fill="url(#tufts)" />
      <Layer d={{ ne: 'M148 730h55v80h-60z' }} fill="#bdeab8" />
      <Layer d={{ ne: 'M160 745h35l-3 50h-37z' }} fill="#9fe0c6" />
      <Layer d={{ ne: 'M145 795h40v37h-40z' }} fill="#fbf8b8" />
      <Layer d={fieldLine} stroke="#dcedc8" width={3} />
      <Layer d={stream} stroke="#9ccbdd" width={4} />
      <Layer d={river} stroke="#aad3df" width={12} />
      <Layer d={greyStream} stroke="#8fafab" width={4} />
      <Layer d={path} stroke="#c9b184" width={3} />
      <Layer d={track} stroke="#bda874" width={3} dash="11 6" />
      <Layer d={{ ne: 'M1045 30l-75 135-140 235-80 85' }} stroke="#97b184" width={6} />
      <Layer d={{ sw: 'M248 430L395 289 530 480 545 520 210 855z' }} stroke="#83cb83" width={9} opacity={0.6} />
      <Layer d={{ sw: 'M550 520L205 865 30 1110' }} stroke="#a0b294" width={10} opacity={0.8} />
      <Layer d={boundary} stroke="#a58bab" width={5} dash="18 5 5 5" />
      <Layer d={power} stroke="#93a08b" width={2} />
      {pylons.map(([at, x, y]) => <rect key={`${at}${x}${y}`} transform={origin[at]} x={x - 4} y={y - 4} width="8" height="8" fill="#7d8578" />)}
      <Layer d={street} stroke="#fff" width={5} />
      <Layer d={lane} stroke="#bfc4b8" width={9} />
      <Layer d={lane} stroke="#fff" width={6} />
      <Layer d={tertiary} stroke="#a9aca4" width={13} />
      <Layer d={tertiary} stroke="#fff" width={9} />
      <Layer d={secondary} stroke="#c98f4e" width={14} />
      <Layer d={secondary} stroke="#fbd09a" width={10} />
      <Layer d={primary} stroke="#c94f70" width={16} />
      <Layer d={primary} stroke="#e8859c" width={12} />
      {labels.map((l, i) => (
        <g key={i} transform={origin[l.at]}>
          <text
            transform={`translate(${l.x} ${l.y}) rotate(${l.r ?? 0})`}
            textAnchor="middle"
            dy={l.r ? 8 : 0}
            fontSize={l.size}
            fontStyle={l.italic ? 'italic' : undefined}
            fill={l.color ?? '#333'}
            stroke="#fff"
            strokeOpacity={l.r && !l.color ? 0.25 : 0.65}
            strokeWidth="5"
            paintOrder="stroke"
          >
            {l.text}
          </text>
        </g>
      ))}
      <Shield x={834} y={4} text="L 864" />
      <Shield x={436} y={-6} text="K 215" tone="grey" />
      <Shield x={1925} y={867} text="L 864" />
      <Shield x={647} y={1181} text="K 215" tone="grey" />
      <Shield x={946} y={1425} text="B 211" tone="yellow" />
      <Shield x={2029} y={1506} text="K 214" tone="grey" />
      <circle cx="1056" cy="1130" r="42" fill="#fff" opacity="0.45" />
      <path d="M1056 1106l28 26v29h-19v-22h-18v22h-19v-29zM1074 1100h9v18l-9-8z" fill="#232a85" />
      <path d="M1023 1132l33-31 33 31" fill="none" stroke="#232a85" strokeWidth="7" />
    </svg>
  )
}

function SmallDate({ label }: { label: string }) {
  return (
    <div className="flex h-[13px] w-[86px] items-center border border-gray-400 bg-[#f4f4f4] text-gray-500">
      <input type="checkbox" aria-label={`${label} enabled`} className="ml-px size-[11px] appearance-none rounded-xs border border-gray-500" />
      <input aria-label={label} defaultValue="14.10.2026" className="w-[50px] pl-px text-[8px]" />
      <svg viewBox="0 0 8 9" className="ml-0.5 h-[9px] w-2" fill="#d5d8db" stroke="#777"><path d="M1 .5h6v8H1zM1 3h6M1 5.500h6" strokeWidth="0.6" /></svg>
      <Caret small className="ml-0.5 text-[#2d3f77]" />
    </div>
  )
}

function Combo({ id, width }: { id: string; width: string }) {
  return (
    <div className={clsx('relative h-3.5', width)}>
      <select id={id} className="size-full appearance-none border border-gray-400 bg-white"><option /></select>
      <span className="pointer-events-none absolute inset-y-px right-px flex w-3 items-center justify-center border-l border-gray-400 bg-white"><Caret small /></span>
    </div>
  )
}

function Lens() {
  return (
    <svg viewBox="0 0 20 20" className="size-2.5">
      <path d="M12 12l6 7" stroke="#e39b4a" strokeWidth="4" />
      <circle cx="8" cy="8" r="6" fill="#b5e0f7" stroke="#5ba4d2" strokeWidth="3" />
    </svg>
  )
}

function MapToolbar() {
  const btn = 'flex h-4 items-center justify-center gap-0.5 justify-self-start border border-gray-300 bg-white whitespace-nowrap'
  return (
    <div className="shrink-0 bg-white pl-[3px] text-[9px]">
      <div className="grid h-[37px] grid-cols-[57px_82px_30px_114px_26px_96px_60px_46px_129px_1fr] grid-rows-2 items-center">
        <label className="flex items-center gap-0.5"><Tick label="Area no" defaultChecked />Area no</label>
        <label className="flex items-center gap-0.5"><Tick label="curr.Driver" defaultChecked />curr.Driver</label>
        <label htmlFor="driver">Driver</label>
        <Combo id="driver" width="w-[103px]" />
        <span>from:</span>
        <SmallDate label="from" />
        <button className={clsx(btn, 'w-[55px]')}><Lens />Locations</button>
        <button className={clsx(btn, 'w-[41px]')}>
          <svg viewBox="0 0 20 16" className="h-2 w-2.5"><path d="M1 1v9h9L7 7q6-3 8 6 6-11-3-12Q7 0 4 4z" fill="#4b9bd0" /></svg>
          Reset
        </button>
        <label htmlFor="vehicle">Vehicle</label>
        <span />
        <label className="flex items-center gap-0.5"><Tick label="S-place" defaultChecked />S-place</label>
        <label className="flex items-center gap-0.5"><Tick label="Current cases" />Current cases</label>
        <label htmlFor="order">Order</label>
        <input id="order" className="h-3.5 w-[103px] border border-gray-400" />
        <span>to:</span>
        <SmallDate label="to" />
        <button className={clsx(btn, 'w-[41px]')}><Lens />Route</button>
        <button className={clsx(btn, 'w-[34px] gap-1')}>Area <Caret small /></button>
        <Combo id="vehicle" width="w-[119px]" />
        <button className={clsx(btn, 'w-[55px] gap-1')}>Work shift <Caret small /></button>
      </div>
      <p className="h-[11px] text-[8px] leading-[11px]">* 14.10.2026 - 19:35:16 Finished</p>
    </div>
  )
}

function MapPane() {
  return (
    <section className="flex min-h-0 min-w-0 flex-[698_1_0%] flex-col bg-white">
      <div className="flex h-[23px] shrink-0 items-center justify-between border-b border-[#8ba6b8]">
        <button className="h-5 border-x border-t border-[#8ba6b8] px-1 text-xs text-[#4a6b82]">Map</button>
        <PanelControls />
      </div>
      <MapToolbar />
      <div className="relative flex-1 overflow-hidden">
        <MapCanvas />
        <div className="absolute top-[9px] left-2 flex w-[26px] flex-col overflow-hidden rounded-xs border border-gray-400 bg-white">
          <button aria-label="Zoom in" className="flex h-6 items-center justify-center border-b border-gray-300"><svg viewBox="0 0 10 10" className="size-2.5" stroke="#000" strokeWidth="1.500"><path d="M0 5h10M5 0v10" /></svg></button>
          <button aria-label="Zoom out" className="flex h-6 items-center justify-center"><svg viewBox="0 0 10 10" className="size-2.5" stroke="#000" strokeWidth="1.500"><path d="M0 5h10" /></svg></button>
        </div>
        <button aria-label="Search map" className="absolute top-[67px] left-2 flex size-[31px] items-center justify-center rounded-full border border-gray-300 bg-white"><Search size={17} strokeWidth={3.500} /></button>
        <button aria-label="Layers" className="absolute top-[9px] right-2 flex size-[37px] items-center justify-center rounded border border-[#a9bf98] bg-white">
          <svg viewBox="0 0 64 60" className="h-[21px] w-[22px]">
            <path d="M0 42l32-18 32 18-32 18z" fill="#777" /><path d="M0 37l32-18 32 18-32 18z" fill="#fff" />
            <path d="M0 33l32-18 32 18-32 18z" fill="#888" /><path d="M0 28l32-18 32 18-32 18z" fill="#fff" />
            <path d="M0 24l32-18 32 18-32 18z" fill="#999" /><path d="M2 19L32 2l30 17-30 17z" fill="#d4d4d4" />
          </svg>
        </button>
        <div className="absolute bottom-1 left-1 text-[10px] leading-3 text-gray-700">
          <div className="h-3.5 w-[70px] border border-t-0 border-gray-600 bg-white/60 pl-1">500 m</div>
          <div className="h-3.5 w-[43px] border border-t-0 border-b-0 border-gray-600 bg-white/60 pt-px pl-1 whitespace-nowrap">1000 ft</div>
        </div>
        <p className="absolute right-0 bottom-0 flex items-center gap-0.5 bg-white/80 px-[3px] text-[10px] leading-3 text-gray-800">
          <svg viewBox="0 0 10 6" className="h-1.5 w-2.5"><path d="M0 0h10v3H0z" fill="#4c7be1" /><path d="M0 3h10v3H0z" fill="#ffd500" /></svg>
          <span>
            <a href="#leaflet" className="text-[#0078a8]">Leaflet</a> | <a href="#et360" className="text-[#0078a8]">et360 GmbH</a> map data © <a href="#osm" className="text-[#0078a8]">OpenStreetMap</a> contributors
          </span>
        </p>
      </div>
    </section>
  )
}

/* ---------- frame ---------- */

function StatusBar() {
  const cell = 'flex h-5 w-8 items-center justify-center rounded-xs'
  const status = [
    <svg viewBox="0 0 14 12" className="h-[11px] w-3" fill="none" stroke="#222"><path d="M3 8.500H1.500Q1 6 3 5.500 4 2.500 7 2.500T11 5.500q2 .5 1.500 3H11M5.500 8.500h3" /><circle cx="4.200" cy="9" r="1.200" /><circle cx="9.800" cy="9" r="1.200" /></svg>,
    <svg viewBox="0 0 12 12" className="size-[11px]"><path d="M6 1l5.500 10H.5z" /><path d="M6 5v3M6 9v1" stroke="#999" /></svg>,
    <svg viewBox="0 0 12 12" className="size-2.5" fill="none" stroke="#222"><rect x="1" y="1" width="10" height="10" rx="1.500" /><path d="M1 7h6v4M7 1v3h4M4 3.500h1M9 7v2" /></svg>,
    <svg viewBox="0 0 12 12" className="size-2.5" stroke="#222"><path d="M1 2h8M1 6h11M1 10h7" /></svg>,
    <FileText size={11} />,
    <svg viewBox="0 0 12 12" className="size-[11px]" fill="none" stroke="#222"><circle cx="6" cy="2.500" r="1.500" /><path d="M6 4v5M4 7H3l-2 4h10L9 7H8" /></svg>,
    <Flag size={10} />,
    <svg viewBox="0 0 4 12" className="h-[11px] w-1"><circle cx="2" cy="2" r="1.200" /><path d="M1 4.500h2V11H1z" /></svg>,
  ]
  return (
    <footer className="flex h-[22px] shrink-0 items-center bg-white text-gray-800">
      <button aria-label="Messages" className={cell}>
        <svg viewBox="0 0 14 13" className="h-3 w-3.5" fill="none" stroke="currentColor"><path d="M10.500 1.500H1v8h2v2.500l3-2.500h6.500V4" /><circle cx="12.500" cy="1.500" r="1" fill="currentColor" /></svg>
      </button>
      <button aria-label="Traffic" className={clsx(cell, 'bg-[#ff8000] text-[#4a2500]')}>
        <svg viewBox="0 0 10 13" className="h-[13px] w-2.5" fill="none" stroke="currentColor" strokeWidth="1"><rect x="2.500" y=".5" width="5" height="12" rx="1.500" /><circle cx="5" cy="3" r="1" /><circle cx="5" cy="6.500" r="1" /><circle cx="5" cy="10" r="1" /><path d="M0 3h2M0 6.500h2M0 10h2M8 3h2M8 6.500h2M8 10h2" /></svg>
      </button>
      <button aria-label="Mail" className={cell}><Mail size={13} strokeWidth={1.500} /></button>
      <button aria-label="Assistant" className={cell}>
        <svg viewBox="0 0 12 13" className="h-[13px] w-3" fill="none" stroke="currentColor"><path d="M6 0v2M3 2.500h6v4H3zM1.500 4.500h1M9.500 4.500h1M1 12.500l1-4h8l1 4M4 12.500v-2h4v2" /><path d="M4.500 4.500h.8M6.700 4.500h.8" /></svg>
      </button>
      <button aria-label="Home" className={clsx(cell, 'bg-[#425f76] text-white')}><Home size={14} strokeWidth={1.800} /></button>
      <div className="ml-auto flex">
        {status.map((icon, i) => <span key={i} className="flex w-[37px] items-center justify-center">{icon}</span>)}
      </div>
    </footer>
  )
}

function Splitter() {
  return (
    <div className="flex w-1.5 shrink-0 flex-col items-center justify-center border-x border-[#7794a8] bg-[#b5c6d2]">
      <svg viewBox="0 0 4 50" className="h-12 w-1" fill="#222"><path d="M0 2l4 3-4 3zM0 40l4 3-4 3z" /><path d="M2 14v20" stroke="#222" strokeWidth="2" strokeDasharray="1 1.500" /></svg>
    </div>
  )
}

export default function App() {
  return (
    <div className="flex h-screen min-h-[700px] flex-col overflow-hidden bg-black px-0.5 pt-[3px] font-['Liberation_Sans',sans-serif] text-black">
      <TitleBar />
      <MenuBar />
      <Ribbon />
      <div className="h-[15px] shrink-0 bg-[#56788f]" />
      <main className="flex min-h-0 flex-1 bg-white pb-0.5">
        <Splitter />
        <div className="w-[3px] shrink-0" />
        <OrdersPane />
        <div className="w-1.5 shrink-0" />
        <MapPane />
        <Splitter />
      </main>
      <StatusBar />
      <p className="h-[3px] shrink-0 overflow-hidden pl-[401px] text-base leading-3 whitespace-pre text-gray-300">Stone Temple Pilots, and later became their lead vocalist for a time...  At age seven, an</p>
    </div>
  )
}
